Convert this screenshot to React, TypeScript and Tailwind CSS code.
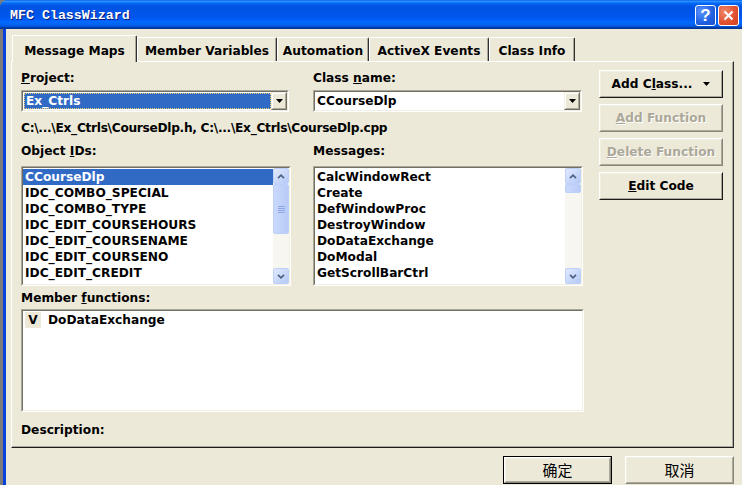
import React from 'react';

const F = "font-['DejaVu_Sans',sans-serif] font-bold text-[12.2px] text-black";

function Sunken({ className = '', children }: { className?: string; children?: React.ReactNode }) {
  return (
    <div className={`border border-t-[#aca899] border-l-[#aca899] border-r-white border-b-white ${className}`}>
      <div className="border border-t-[#716f64] border-l-[#716f64] border-r-[#f1efe2] border-b-[#f1efe2] h-full bg-white flex">
        {children}
      </div>
    </div>
  );
}

function Raised({
  className = '',
  dark = true,
  children,
}: {
  className?: string;
  dark?: boolean;
  children?: React.ReactNode;
}) {
  return (
    <div
      className={`border border-t-white border-l-white ${
        dark ? 'border-r-[#1a1a1a] border-b-[#1a1a1a]' : 'border-r-[#8a877a] border-b-[#8a877a]'
      } ${className}`}
    >
      <div className="border border-t-[#f1efe2] border-l-[#f1efe2] border-r-[#aca899] border-b-[#aca899] h-full flex items-center justify-center bg-[#ece9d8]">
        {children}
      </div>
    </div>
  );
}

function DropBtn() {
  return (
    <div className="w-[16px] h-full border border-t-[#f1efe2] border-l-[#f1efe2] border-r-[#716f64] border-b-[#716f64]">
      <div className="h-full border border-t-white border-l-white border-r-[#aca899] border-b-[#aca899] bg-[#ece9d8] flex items-center justify-center">
        <svg width="7" height="4" viewBox="0 0 7 4">
          <path d="M0 0 H7 L3.5 4 Z" fill="#000" />
        </svg>
      </div>
    </div>
  );
}

function ScrollBtn({ dir }: { dir: 'up' | 'down' }) {
  return (
    <div className="w-[16px] h-[16px] rounded-[2px] border border-[#bcd0fa] bg-linear-to-br from-[#e1eafe] to-[#b5c9f6] flex items-center justify-center">
      <svg width="8" height="5" viewBox="0 0 8 5">
        <path
          d={dir === 'up' ? 'M1 4.2 L4 1.2 L7 4.2' : 'M1 0.8 L4 3.8 L7 0.8'}
          stroke="#4d6185"
          strokeWidth="1.7"
          fill="none"
        />
      </svg>
    </div>
  );
}

function ScrollBar({ thumb, grip }: { thumb: number; grip?: boolean }) {
  return (
    <div className="w-[16px] h-full flex flex-col bg-[#f7f6f0]">
      <ScrollBtn dir="up" />
      <div className="flex-1 flex flex-col">
        <div
          className="w-[16px] rounded-[2px] border border-[#bcd0fa] bg-linear-to-r from-[#cad8fc] to-[#b8cbf7] flex flex-col items-center justify-center gap-[1px]"
          style={{ height: thumb }}
        >
          {grip && (
            <>
              <div className="w-[7px] h-[1px] bg-[#8ca6e6]" />
              <div className="w-[7px] h-[1px] bg-[#8ca6e6]" />
              <div className="w-[7px] h-[1px] bg-[#8ca6e6]" />
              <div className="w-[7px] h-[1px] bg-[#8ca6e6]" />
            </>
          )}
        </div>
      </div>
      <ScrollBtn dir="down" />
    </div>
  );
}

function Label({ children, className = '' }: { children: React.ReactNode; className?: string }) {
  return <div className={`h-[15px] leading-[15px] whitespace-nowrap ${className}`}>{children}</div>;
}

function ListBox({ items, selected, thumb, grip }: { items: string[]; selected?: number; thumb: number; grip?: boolean }) {
  return (
    <Sunken className="h-[120px]">
      <div className="flex-1 overflow-hidden pt-[1px]">
        {items.map((t, i) => (
          <div
            key={t}
            className={`h-[16px] leading-[16px] pl-[2px] whitespace-nowrap ${
              i === selected ? 'bg-[#316ac5] text-white' : ''
            }`}
          >
            {t}
          </div>
        ))}
      </div>
      <ScrollBar thumb={thumb} grip={grip} />
    </Sunken>
  );
}

const tabs = [
  { t: 'Message Maps', w: 125 },
  { t: 'Member Variables', w: 140 },
  { t: 'Automation', w: 92 },
  { t: 'ActiveX Events', w: 120 },
  { t: 'Class Info', w: 86 },
];

export default function App() {
  return (
    <div className={`w-[742px] h-[485px] overflow-hidden bg-[#7b7b7b] flex flex-col ${F}`}>
      {/* Title bar */}
      <div className="h-[29px] rounded-tl-[7px] flex items-start justify-between bg-[linear-gradient(to_bottom,#0058ee_0%,#3593ff_4%,#288eff_6%,#127dff_8%,#036ffc_10%,#0262ee_14%,#0057e5_20%,#0054e3_24%,#0055eb_56%,#005bf5_66%,#026afe_76%,#0062ef_86%,#0052d6_92%,#0040ab_94%,#003092_100%)]">
        <div className="pl-[10px] pt-[9px] font-['Liberation_Mono',monospace] font-bold text-[13.3px] leading-[13px] text-white [text-shadow:1px_1px_0_#0a1a78] whitespace-nowrap">
          MFC ClassWizard
        </div>
        <div className="flex gap-[2px] pt-[5px] pr-[3px]">
          <div className="w-[21px] h-[21px] rounded-[3px] border border-white bg-[radial-gradient(circle_at_30%_30%,#5b94ff,#1f5fe0_60%,#1a4fc8)] flex items-center justify-center font-['Liberation_Sans',sans-serif] text-white text-[17px] font-bold leading-none">
            ?
          </div>
          <div className="w-[21px] h-[21px] rounded-[3px] border border-white bg-[radial-gradient(circle_at_30%_30%,#f0866a,#e0502f_60%,#c8401f)] flex items-center justify-center">
            <svg width="11" height="11" viewBox="0 0 11 11">
              <path d="M1.5 1.5 L9.5 9.5 M9.5 1.5 L1.5 9.5" stroke="#fff" strokeWidth="2" />
            </svg>
          </div>
        </div>
      </div>

      <div className="flex-1 flex">
        <div className="w-[3px] bg-[#7b7b7b]" />
        <div className="w-[3px] bg-[#0842dd]" />
        {/* Body */}
        <div className="flex-1 bg-[#ece9d8] pl-[5px] pr-[8px] pt-[6px] flex flex-col">
          {/* Tabs */}
          <div className="h-[26px] flex items-end pl-[1px]">
            {tabs.map((tab, i) => (
              <div
                key={tab.t}
                style={{ width: tab.w }}
                className={`rounded-t-[2px] border-t border-l border-t-white border-l-white border-r border-r-[#303030] shadow-[inset_-1px_0_0_#aca899] bg-[#ece9d8] whitespace-nowrap text-center ${
                  i === 0 ? 'h-[27px] -mb-[1px] relative z-10 pt-[6px]' : 'h-[24px] pt-[4px]'
                }`}
              >
                <span className="leading-[15px]">{tab.t}</span>
              </div>
            ))}
          </div>

          {/* Panel */}
          <div className="h-[387px] border-t border-l border-t-white border-l-white border-r border-b border-r-[#303030] border-b-[#1a1a1a] shadow-[inset_-1px_-1px_0_#aca899] pt-[8px] pl-[9px] flex">
            <div className="w-[563px] flex flex-col">
              <div className="grid grid-cols-[270px_271px] gap-x-[22px]">
                <div className="pt-[1px]">
                  <Label>
                    <span className="underline">P</span>roject:
                  </Label>
                  <Sunken className="mt-[4px] h-[22px] w-[268px]">
                    <div className="flex-1 m-[1px] mr-0 bg-[#316ac5] border border-dotted border-[#e8d070] text-white leading-[15px] pl-[1px] whitespace-nowrap">
                      Ex_Ctrls
                    </div>
                    <DropBtn />
                  </Sunken>
                </div>
                <div className="pt-[1px]">
                  <Label>
                    Class <span className="underline">n</span>ame:
                  </Label>
                  <Sunken className="mt-[4px] h-[22px] w-[269px]">
                    <div className="flex-1 leading-[18px] pl-[2px] whitespace-nowrap">CCourseDlp</div>
                    <DropBtn />
                  </Sunken>
                </div>
              </div>

              <Label className="mt-[9px] tracking-[-0.3px]">C:\...\Ex_Ctrls\CourseDlp.h, C:\...\Ex_Ctrls\CourseDlp.cpp</Label>

              <div className="grid grid-cols-[270px_271px] gap-x-[22px] mt-[8px]">
                <div>
                  <Label>
                    Object <span className="underline">I</span>Ds:
                  </Label>
                  <div className="mt-[7px]">
                    <ListBox
                      items={[
                        'CCourseDlp',
                        'IDC_COMBO_SPECIAL',
                        'IDC_COMBO_TYPE',
                        'IDC_EDIT_COURSEHOURS',
                        'IDC_EDIT_COURSENAME',
                        'IDC_EDIT_COURSENO',
                        'IDC_EDIT_CREDIT',
                      ]}
                      selected={0}
                      thumb={50}
                      grip
                    />
                  </div>
                </div>
                <div className="w-[270px]">
                  <Label>Messages:</Label>
                  <div className="mt-[7px]">
                    <ListBox
                      items={[
                        'CalcWindowRect',
                        'Create',
                        'DefWindowProc',
                        'DestroyWindow',
                        'DoDataExchange',
                        'DoModal',
                        'GetScrollBarCtrl',
                      ]}
                      thumb={9}
                    />
                  </div>
                </div>
              </div>

              <Label className="mt-[5px]">
                Member <span className="underline">f</span>unctions:
              </Label>
              <Sunken className="mt-[3px] h-[103px]">
                <div className="flex-1 pl-[2px] pt-[1px]">
                  <div className="flex items-center h-[16px]">
                    <div className="w-[16px] h-[16px] bg-[#ece9d8] leading-[16px] text-center">V</div>
                    <div className="ml-[7px] leading-[16px]">DoDataExchange</div>
                  </div>
                </div>
              </Sunken>

              <Label className="mt-[11px]">Description:</Label>
            </div>

            {/* Right buttons */}
            <div className="ml-[15px] w-[124px] flex flex-col gap-[6px]">
              <Raised className="h-[28px]">
                <span className="whitespace-nowrap">
                  Add C<span className="underline">l</span>ass...
                </span>
                <svg width="7" height="4" viewBox="0 0 7 4" className="ml-[11px]">
                  <path d="M0 0 H7 L3.5 4 Z" fill="#000" />
                </svg>
              </Raised>
              <Raised className="h-[28px]" dark={false}>
                <span className="whitespace-nowrap text-[#aca899] [text-shadow:1px_1px_0_#fff]">
                  <span className="underline">A</span>dd Function
                </span>
              </Raised>
              <Raised className="h-[28px]" dark={false}>
                <span className="whitespace-nowrap text-[#aca899] [text-shadow:1px_1px_0_#fff]">
                  <span className="underline">D</span>elete Function
                </span>
              </Raised>
              <Raised className="h-[28px]">
                <span className="whitespace-nowrap">
                  <span className="underline">E</span>dit Code
                </span>
              </Raised>
            </div>
          </div>

          {/* Bottom buttons */}
          <div className="mt-[8px] flex justify-end gap-[13px] font-['Noto_Sans_CJK_SC',sans-serif] font-normal text-[15px]">
            <div className="w-[109px] h-[28px] border border-black">
              <Raised className="h-full" dark={false}>
                <span className="leading-[16px]">确定</span>
              </Raised>
            </div>
            <Raised className="w-[109px] h-[28px]" dark={false}>
              <span className="leading-[16px]">取消</span>
            </Raised>
          </div>
        </div>
      </div>
    </div>
  );
}
